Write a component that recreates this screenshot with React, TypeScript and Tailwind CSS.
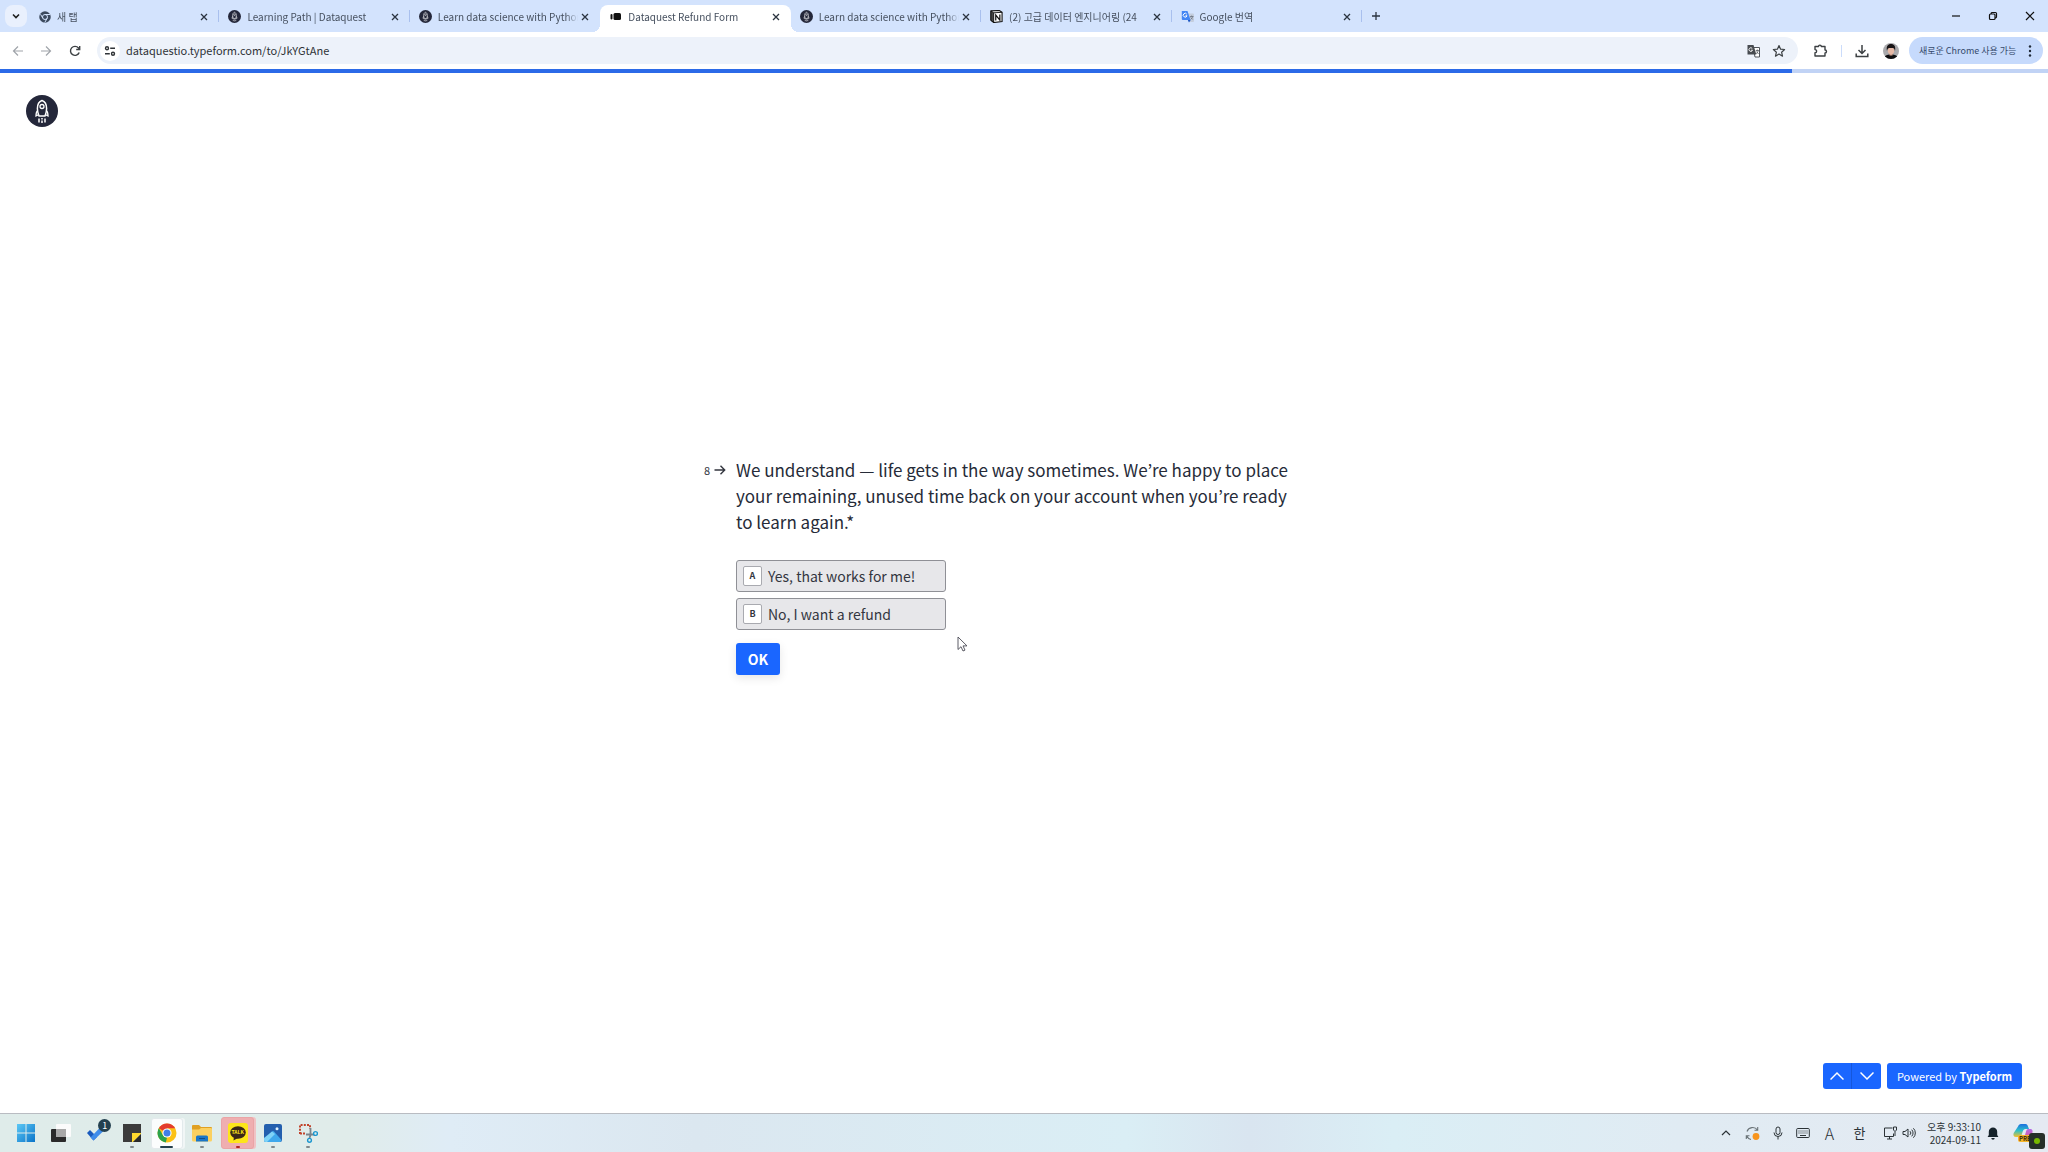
import type { ReactNode } from "react";

function RocketBadge({ className }: { className: string }) {
  return (
    <svg viewBox="0 0 32 32" className={className} aria-hidden="true">
      <circle cx="16" cy="16" r="16" fill="#24273a" />
      <path d="M16 5.500c-2.800 1-4.600 4-4.600 8 0 2.500.5 5 1.600 7.500h6c1.100-2.500 1.600-5 1.600-7.500 0-4-1.800-7-4.600-8z" fill="none" stroke="#fff" strokeWidth="1.500" />
      <circle cx="16" cy="11.500" r="2" fill="none" stroke="#fff" strokeWidth="1.300" />
      <path d="M11.700 15.500c-1.300 1-1.700 2.500-1.700 5.500l2.800-1.500M20.300 15.500c1.300 1 1.700 2.500 1.700 5.500l-2.800-1.500" fill="none" stroke="#fff" strokeWidth="1.300" />
      <path d="M13 23.500v4M16 23v1.500M16 25.500v2.500M19 23.500v4" stroke="#fff" strokeWidth="1.500" />
    </svg>
  );
}

function ChromeMono() {
  return (
    <svg viewBox="0 0 24 24" className="size-3" aria-hidden="true">
      <circle cx="12" cy="12" r="11.500" fill="#3c4a5e" />
      <circle cx="12" cy="12" r="5" fill="#3c4a5e" stroke="#d3e3fd" strokeWidth="2" />
      <path d="M12 7h10M7.700 14.500L3 6.500M16.300 14.500L11.500 23" stroke="#d3e3fd" strokeWidth="2" />
    </svg>
  );
}

function TypeformIcon() {
  return (
    <svg viewBox="0 0 13 13" className="size-[13px]" aria-hidden="true">
      <rect x="1.500" y="4" width="2" height="5.500" rx="1" fill="#111" />
      <rect x="4.500" y="3" width="7.500" height="7" rx="1.500" fill="#111" />
    </svg>
  );
}

function NotionIcon() {
  return (
    <svg viewBox="0 0 14 14" className="size-[13px]" aria-hidden="true">
      <path d="M1 1l9-.5L13 2.500v10l-9 1-3-2.500z" fill="#fff" stroke="#111" strokeWidth="1.200" />
      <path d="M1 1l3 2v10.500L1 11zM4 3l9-.5" fill="#444" stroke="#111" strokeWidth="1" />
      <path d="M6.200 11.200V5.400l4.400 5.400V4.800" fill="none" stroke="#111" strokeWidth="1.300" />
    </svg>
  );
}

function TranslateColor() {
  return (
    <svg viewBox="0 0 13 13" className="size-[13px]" aria-hidden="true">
      <path d="M5 3.500h7a1 1 0 011 1V11a1 1 0 01-1 1H8z" fill="#c4cede" />
      <path d="M1 1h5.500l3 9H1.800A1 1 0 01.8 9V1z" fill="#4285f4" />
      <path d="M6.800 10h2.900L8 12.500z" fill="#1a56c4" />
      <path d="M5.800 4.200A1.900 1.900 0 106 5.800H4.500" fill="none" stroke="#fff" strokeWidth="1" />
      <path d="M9 6.500h3.500M10.700 5.500v1M11.700 6.500c-.3 1.300-1 2.200-2 3M9.700 7.500l2 2" fill="none" stroke="#6b7280" strokeWidth=".8" />
    </svg>
  );
}

function CloseGlyph({ className }: { className: string }) {
  return (
    <svg viewBox="0 0 10 10" className={className} aria-hidden="true">
      <path d="M2 2l6 6M8 2L2 8" stroke="currentColor" strokeWidth="1.300" fill="none" />
    </svg>
  );
}

type TabData = { title: string; icon: ReactNode; active?: boolean; separator?: boolean };

const tabs: TabData[] = [
  { title: "새 탭", icon: <ChromeMono />, separator: true },
  { title: "Learning Path | Dataquest", icon: <RocketBadge className="size-[13px]" />, separator: true },
  { title: "Learn data science with Python", icon: <RocketBadge className="size-[13px]" /> },
  { title: "Dataquest Refund Form", icon: <TypeformIcon />, active: true },
  { title: "Learn data science with Python", icon: <RocketBadge className="size-[13px]" />, separator: true },
  { title: "(2) 고급 데이터 엔지니어링 (24", icon: <NotionIcon />, separator: true },
  { title: "Google 번역", icon: <TranslateColor />, separator: true },
];

function Tab({ title, icon, active, separator }: TabData) {
  return (
    <div className={active ? "relative flex h-[27px] min-w-0 flex-1 self-end rounded-t-lg bg-white" : "relative flex h-[27px] min-w-0 flex-1 self-end"}>
      {active && (
        <>
          <span className="absolute bottom-0 -left-2 size-2 bg-[radial-gradient(circle_at_0_0,transparent_8px,white_8px)]" />
          <span className="absolute -right-2 bottom-0 size-2 bg-[radial-gradient(circle_at_100%_0,transparent_8px,white_8px)]" />
        </>
      )}
      <button className="flex h-[23px] min-w-0 flex-1 items-center gap-[6px] pl-[9px] text-left">
        <span className="flex size-[13px] shrink-0 items-center justify-center">{icon}</span>
        <span className="min-w-0 flex-1 overflow-hidden mask-[linear-gradient(to_right,black_calc(100%-12px),transparent)] text-[10px] leading-4 whitespace-nowrap text-[#46505f]">
          {title}
        </span>
      </button>
      <button aria-label={`Close ${title}`} className="mr-2 flex h-[23px] w-[14px] items-center justify-center text-[#2b3440]">
        <CloseGlyph className="size-[10px]" />
      </button>
      {separator && <span className="mt-[5px] -ml-px h-3 w-px bg-[#a9c0ee]" />}
    </div>
  );
}

function TabStrip() {
  return (
    <div className="flex h-8 bg-[#d3e3fd]">
      <div className="flex w-[29px] shrink-0 items-center pl-[5px]">
        <button aria-label="Search tabs" className="flex size-[22px] items-center justify-center rounded-lg bg-[#e9f0fd]">
          <svg viewBox="0 0 10 10" className="size-[10px]" fill="none" stroke="#1f1f1f" strokeWidth="1.600">
            <path d="M2 3.500l3 3 3-3" />
          </svg>
        </button>
      </div>
      <div className="flex min-w-0 shrink basis-[1333px]">
        {tabs.map((t, i) => (
          <Tab key={i} {...t} />
        ))}
      </div>
      <button aria-label="New tab" className="flex w-[28px] items-center justify-center">
        <svg viewBox="0 0 10 10" className="size-[10px]" stroke="#2b3440" strokeWidth="1.300">
          <path d="M5 1v8M1 5h8" />
        </svg>
      </button>
      <div className="ml-auto flex text-[#111]">
        <button aria-label="Minimize" className="flex w-[37px] items-center justify-center">
          <svg viewBox="0 0 10 10" className="size-[10px]" stroke="currentColor" strokeWidth="1.200">
            <path d="M1 5h8" />
          </svg>
        </button>
        <button aria-label="Restore" className="flex w-[37px] items-center justify-center">
          <svg viewBox="0 0 10 10" className="size-[10px]" fill="none" stroke="currentColor" strokeWidth="1.200">
            <rect x="1.500" y="3" width="5.500" height="5.500" rx="1" />
            <path d="M3.200 3V2.500a1 1 0 011-1h3.300a1 1 0 011 1v3.300a1 1 0 01-1 1H7" />
          </svg>
        </button>
        <button aria-label="Close window" className="flex w-[37px] items-center justify-center">
          <svg viewBox="0 0 10 10" className="size-[10px]" stroke="currentColor" strokeWidth="1.200">
            <path d="M1 1l8 8M9 1L1 9" />
          </svg>
        </button>
      </div>
    </div>
  );
}

function Toolbar() {
  return (
    <div className="flex h-[37px] items-center bg-white pr-[5px] pl-1">
      <button aria-label="Back" className="flex w-7 items-center justify-center">
        <svg viewBox="0 0 12 12" className="size-3" fill="none" stroke="#a0a4aa" strokeWidth="1.200">
          <path d="M11 6H1.500M6 1.500L1.500 6 6 10.500" />
        </svg>
      </button>
      <button aria-label="Forward" className="flex w-7 items-center justify-center">
        <svg viewBox="0 0 12 12" className="size-3" fill="none" stroke="#a0a4aa" strokeWidth="1.200">
          <path d="M1 6h9.500M6 1.500L10.500 6 6 10.500" />
        </svg>
      </button>
      <button aria-label="Reload" className="flex w-[30px] items-center justify-center">
        <svg viewBox="0 0 12 12" className="size-3" fill="none" stroke="#3c4043" strokeWidth="1.400">
          <path d="M10.200 7.500A4.500 4.500 0 119.500 3l1 1.200" />
          <path d="M10.700 1v3.500H7.200" />
        </svg>
      </button>
      <div className="ml-[7px] flex h-[27px] min-w-0 flex-1 items-center rounded-full bg-[#edf2fa] pr-[7px] pl-[3px]">
        <button aria-label="View site information" className="flex size-5 items-center justify-center rounded-full bg-white">
          <svg viewBox="0 0 12 12" className="size-3" fill="none" stroke="#2f3337" strokeWidth="1.400">
            <circle cx="3" cy="3.200" r="1.500" />
            <path d="M6.200 3.200H11M1 8.800h4.800" />
            <circle cx="9" cy="8.800" r="1.500" />
          </svg>
        </button>
        <input
          aria-label="Address"
          defaultValue="dataquestio.typeform.com/to/JkYGtAne"
          className="ml-[6px] min-w-0 flex-1 bg-transparent pb-[2px] text-[11px] leading-5 text-[#2f3337] outline-none"
        />
        <button aria-label="Translate this page" className="flex w-[26px] items-center justify-center">
          <svg viewBox="0 0 14 14" className="size-[14px]">
            <path d="M6 3.500h6.500v9.500H8z" fill="#fff" stroke="#50555b" strokeWidth="1" />
            <path d="M.5 1h6l2.800 9.500H.5z" fill="#474b50" />
            <path d="M5.300 4.600a1.800 1.800 0 10.200 1.600H4" fill="none" stroke="#fff" strokeWidth=".9" />
            <path d="M8.800 6.500h3M10.300 5.500v1M11.300 6.500c-.3 1.500-1 2.500-2 3.300M9.300 7.500l2.300 2.500" fill="none" stroke="#50555b" strokeWidth=".8" />
          </svg>
        </button>
        <button aria-label="Bookmark this tab" className="flex w-[24px] items-center justify-center">
          <svg viewBox="0 0 14 14" className="size-[14px]" fill="none" stroke="#3c4043" strokeWidth="1.200" strokeLinejoin="round">
            <path d="M7 1.500l1.600 3.700 4 .3-3 2.700.9 4L7 10.100l-3.500 2.100.9-4-3-2.700 4-.3z" />
          </svg>
        </button>
      </div>
      <button aria-label="Extensions" className="ml-2 flex w-7 items-center justify-center">
        <svg viewBox="0 0 15 15" className="size-[15px]" fill="none" stroke="#3c4043" strokeWidth="1.400" strokeLinejoin="round">
          <path d="M2 3.500h3.500a1.400 1.400 0 012.800 0H12V7a1.500 1.500 0 010 3v3H2v-3.200a1.600 1.600 0 000-3.200z" />
        </svg>
      </button>
      <span className="mr-[6px] ml-[7px] h-3 w-px bg-[#cbdcfb]" />
      <button aria-label="Downloads" className="flex w-7 items-center justify-center">
        <svg viewBox="0 0 14 14" className="size-[14px]" fill="none" stroke="#3c4043" strokeWidth="1.500">
          <path d="M7 1v8M3.500 6L7 9.500 10.500 6M1.200 9.500v3h11.600v-3" />
        </svg>
      </button>
      <button aria-label="Profile" className="flex w-[30px] items-center justify-center">
        <svg viewBox="0 0 16 16" className="size-4 rounded-full">
          <rect width="16" height="16" fill="#a9a9ac" />
          <path d="M1 16c0-3.500 3-4.500 7-4.500s7 1 7 4.500z" fill="#0c0c0e" />
          <rect x="6.500" y="9" width="3" height="3.500" fill="#d9a58f" />
          <ellipse cx="8" cy="7.400" rx="3.200" ry="3.800" fill="#e6b9a6" />
          <path d="M4 8C3 3 5 1 8 1s5 2 4 7c-.5-2.500-1-3-4-3S4.500 5.500 4 8z" fill="#191516" />
        </svg>
      </button>
      <button className="ml-[3px] flex h-[27px] w-[134px] items-center justify-between rounded-full bg-[#c6dafc] pr-[11px] pl-[10px] text-[9px] leading-4 whitespace-nowrap text-[#35496b]">
        <span>새로운 Chrome 사용 가능</span>
        <svg viewBox="0 0 4 12" className="h-3 w-1 shrink-0" fill="#1f2937">
          <circle cx="2" cy="1.500" r="1.200" />
          <circle cx="2" cy="6" r="1.200" />
          <circle cx="2" cy="10.500" r="1.200" />
        </svg>
      </button>
    </div>
  );
}

function Choice({ letter, label }: { letter: string; label: string }) {
  return (
    <label className="flex h-8 w-[210px] items-center rounded-[3px] border border-[#8f9096] bg-[#e7e7ea] px-[6px] text-[#33363f]">
      <input type="radio" name="offer" value={letter} className="sr-only" />
      <span className="flex h-5 w-[19px] items-center justify-center rounded-[2px] border border-[#a9aab0] bg-white text-[9px] leading-3 font-bold">
        {letter}
      </span>
      <span className="ml-[6px] text-[14px] leading-5">{label}</span>
    </label>
  );
}

function Question() {
  return (
    <form className="grid w-full max-w-[642px] grid-cols-[33px_1fr] pr-[33px]" onSubmit={(e) => e.preventDefault()}>
      <div className="flex h-[26px] items-center gap-1 pl-px text-[11px] leading-4 text-[#33363f]">
        <span>8</span>
        <svg viewBox="0 0 12 12" className="size-3" fill="none" stroke="#33363f" strokeWidth="1.400">
          <path d="M.5 6h10M6.500 1.800L10.700 6l-4.200 4.200" />
        </svg>
      </div>
      <fieldset>
        <legend className="pr-3 text-[17px] leading-[26px] text-[#262b38]">
          We understand — life gets in the way sometimes. We’re happy to place your remaining, unused time back on your account when you’re ready to learn again.*
        </legend>
        <div className="mt-[25px] flex flex-col gap-[6px]">
          <Choice letter="A" label="Yes, that works for me!" />
          <Choice letter="B" label="No, I want a refund" />
        </div>
        <button type="submit" className="mt-[13px] h-8 w-11 rounded-[3px] bg-[#1a66ff] text-[14px] leading-5 font-bold text-white shadow-[0_3px_10px_rgba(0,0,0,0.1)]">
          OK
        </button>
      </fieldset>
    </form>
  );
}

function TaskIcon({ label, children, mark, cell }: { label: string; children: ReactNode; mark?: string; cell?: string }) {
  return (
    <button aria-label={label} className="relative flex h-full items-center justify-center">
      {cell && <span className={cell} />}
      <span className="relative flex">{children}</span>
      {mark && <span className={mark} />}
    </button>
  );
}

const dot = "absolute bottom-[4px] h-[2px] w-1 rounded-full bg-[#80898c]";

function TaskbarApps() {
  return (
    <div className="ml-2 grid w-[318px] shrink-0 grid-cols-9">
      <TaskIcon label="Start">
        <svg viewBox="0 0 20 20" className="size-5">
          <defs>
            <linearGradient id="win" x1="0" y1="0" x2="1" y2="1">
              <stop offset="0" stopColor="#5cc8f5" />
              <stop offset="1" stopColor="#0a74c9" />
            </linearGradient>
          </defs>
          <path d="M1 1h8.500v8.500H1zM10.500 1H19v8.500h-8.500zM1 10.500h8.500V19H1zM10.500 10.500H19V19h-8.500z" fill="url(#win)" />
        </svg>
      </TaskIcon>
      <TaskIcon label="Task view">
        <svg viewBox="0 0 20 20" className="size-5">
          <rect x="0" y="6" width="15" height="13" rx="1" fill="#2a2a2a" />
          <rect x="5" y="1" width="15" height="13" rx="1" fill="#fbfbfb" />
          <rect x="5" y="6" width="10" height="8" fill="#a8a8a8" />
        </svg>
      </TaskIcon>
      <TaskIcon label="To Do, 1 notification">
        <span className="relative flex size-[26px]">
          <svg viewBox="0 0 26 26" className="size-[26px]">
            <path d="M4 13l3-3 7 7-3.500 3.500z" fill="#195abd" />
            <path d="M7.500 17.500L17.500 7l3.500 3.500-10.500 10z" fill="#3d8bea" />
          </svg>
          <span className="absolute -top-px -right-[2px] flex size-[13px] items-center justify-center rounded-full bg-[#24404f] text-[9px] leading-3 text-white">1</span>
        </span>
      </TaskIcon>
      <TaskIcon label="Sticky Notes" mark={dot}>
        <svg viewBox="0 0 18 18" className="size-[18px]">
          <path d="M0 0h18v10l-8 8H0z" fill="#3b3b3b" />
          <path d="M9 9h9v1l-8 8H9z" fill="#ffd92e" />
          <path d="M18 10v8h-8z" fill="#2a2a2a" />
        </svg>
      </TaskIcon>
      <TaskIcon
        label="Chrome"
        cell="absolute inset-x-[2px] top-1 bottom-[3px] rounded-[3px] border border-[#e3eaec] bg-[#fbfdfd] shadow-[2px_0_0_#f1f6f6]"
        mark="absolute bottom-[4px] h-[2px] w-[13px] rounded-full bg-[#25404d]"
      >
        <svg viewBox="0 0 20 20" className="size-5">
          <circle cx="10" cy="10" r="9.500" fill="#fbc116" />
          <path d="M10 10L1.770 5.250A9.500 9.500 0 0118.230 5.250H10z" fill="#e33b2e" />
          <path d="M1.770 5.250L6.100 12.500l3.900 2.200-1.200 4.700A9.500 9.500 0 011.770 5.250z" fill="#2ba24c" />
          <circle cx="10" cy="10" r="4.600" fill="#fff" />
          <circle cx="10" cy="10" r="3.500" fill="#3f7ee8" />
        </svg>
      </TaskIcon>
      <TaskIcon label="File Explorer" mark={dot}>
        <svg viewBox="0 0 20 20" className="size-5">
          <path d="M0 3a1 1 0 011-1h6l2 2h10a1 1 0 011 1v4H0z" fill="#e0a022" />
          <path d="M0 6.500h7l2-1.500h10a1 1 0 011 1v11a1.500 1.500 0 01-1.500 1.500h-17A1.500 1.500 0 010 17z" fill="#fbd060" />
          <path d="M4 18.500V14a1.500 1.500 0 011.500-1.500h9A1.500 1.500 0 0116 14v4.500z" fill="#1976c8" />
          <path d="M7 15.500h6" stroke="#0f4d8c" />
        </svg>
      </TaskIcon>
      <TaskIcon
        label="KakaoTalk"
        cell="absolute inset-x-[1px] top-[3px] bottom-[3px] rounded-[3px] border border-[#eaa4a6] bg-[#efaeb0] shadow-[2px_0_0_#f0c3c5]"
        mark="absolute bottom-[4px] h-[2px] w-1 rounded-full bg-[#b3261e]"
      >
        <span className="relative flex size-5 items-center justify-center rounded-[3px] bg-[#fde51a]">
          <svg viewBox="0 0 16 15" className="h-[15px] w-4">
            <ellipse cx="8" cy="6.500" rx="7.800" ry="6.200" fill="#3a2718" />
            <path d="M4 10l-.5 4.500L8 12z" fill="#3a2718" />
          </svg>
          <span className="absolute inset-x-0 top-[6px] text-center text-[5px] leading-[6px] font-bold text-[#fde51a]">TALK</span>
        </span>
      </TaskIcon>
      <TaskIcon label="Photos" mark={dot}>
        <svg viewBox="0 0 18 18" className="size-[18px]">
          <rect width="18" height="18" rx="2" fill="#235fae" />
          <path d="M0 16L8 7.500a1.500 1.500 0 012 0L17.500 16a2 2 0 01-1.500 2H2a2 2 0 01-2-2z" fill="#3fa8ec" />
          <path d="M0 14L8 7.500 11 10l-8 8H2a2 2 0 01-2-2z" fill="#7fd3f7" />
          <circle cx="13" cy="4.800" r="1.500" fill="#dff1fd" />
        </svg>
      </TaskIcon>
      <TaskIcon label="Snipping Tool" mark={dot}>
        <svg viewBox="0 0 20 20" className="size-5" fill="none">
          <path d="M2 11V2h10v4" stroke="#c2442c" strokeWidth="2" strokeDasharray="2 1.200" />
          <path d="M2 10.500h5" stroke="#c2442c" strokeWidth="2" strokeDasharray="2 1" />
          <path d="M12.500 5v7l-1 3M8 11.500h8" stroke="#7a848c" strokeWidth="1.800" />
          <circle cx="17.500" cy="10.500" r="1.900" stroke="#1a96cf" strokeWidth="1.400" />
          <circle cx="11.500" cy="17.300" r="1.900" stroke="#1a96cf" strokeWidth="1.400" />
        </svg>
      </TaskIcon>
    </div>
  );
}

function SystemTray() {
  return (
    <div className="ml-auto flex items-center text-[#2b3236]">
      <button aria-label="Show hidden icons" className="flex w-[26px] justify-center">
        <svg viewBox="0 0 10 10" className="size-[10px]" fill="none" stroke="currentColor" strokeWidth="1.200">
          <path d="M1 7l4-4 4 4" />
        </svg>
      </button>
      <button aria-label="Updates" className="flex w-[26px] justify-center">
        <svg viewBox="0 0 15 15" className="size-[15px]" fill="none" stroke="#6b7478" strokeWidth="1.100">
          <path d="M2 5.500A6 6 0 0112.500 4M12.700 1v3.300H9.500M6 13.500A6 6 0 011.800 10M1.300 13V9.700h3.200" />
          <circle cx="11" cy="10.500" r="3.400" fill="#f7941d" stroke="none" />
        </svg>
      </button>
      <button aria-label="Microphone" className="flex w-[25px] justify-center">
        <svg viewBox="0 0 14 14" className="size-[14px]" fill="none" stroke="currentColor" strokeWidth="1">
          <rect x="5" y="1" width="4" height="7.500" rx="2" />
          <path d="M3 6.500a4 4 0 008 0M7 10.500V13.500" />
        </svg>
      </button>
      <button aria-label="Touch keyboard" className="flex w-[26px] justify-center">
        <svg viewBox="0 0 14 14" className="size-[14px]" fill="none" stroke="currentColor" strokeWidth="1">
          <rect x=".7" y="2.500" width="12.600" height="9" rx="1" />
          <path d="M2.500 5h9M2.500 7h9" strokeDasharray="1 1" />
          <path d="M4 9.500h6" />
        </svg>
      </button>
      <button className="w-[27px] text-center text-[16px] leading-5 font-light">A</button>
      <button className="w-[33px] text-center text-[13px] leading-5">한</button>
      <button aria-label="Network" className="ml-1 flex w-[19px] justify-center">
        <svg viewBox="0 0 14 14" className="size-[14px]" fill="none" stroke="currentColor" strokeWidth="1">
          <path d="M9.500 2H1.500v8.500h9V7.500M4 13h5M6.500 10.500V13" />
          <path d="M10.500 1h3v3l-1.500 1.500L10.500 4zM12 5.500V10" />
        </svg>
      </button>
      <button aria-label="Volume" className="flex w-[19px] justify-center">
        <svg viewBox="0 0 14 14" className="size-[14px]" fill="none" stroke="currentColor" strokeWidth="1">
          <path d="M1 5.500h2L6 3v8L3 8.500H1zM8 5.200a2.500 2.500 0 010 3.600M9.700 3.700a4.700 4.700 0 010 6.600M11.400 2.300a6.700 6.700 0 010 9.400" />
        </svg>
      </button>
      <button className="w-[63px] text-right text-[10px] leading-[13px] whitespace-nowrap">
        <span className="block">오후 9:33:10</span>
        <span className="block">2024-09-11</span>
      </button>
      <button aria-label="Notifications" className="ml-[5px] flex w-[14px] justify-center">
        <svg viewBox="0 0 12 13" className="h-[13px] w-3" fill="#16232b">
          <path d="M6 .5a4.200 4.200 0 00-4.200 4.200V8L.6 10h10.800l-1.200-2V4.700A4.200 4.200 0 006 .5zM4.300 11h3.400a1.700 1.700 0 01-3.400 0z" />
        </svg>
      </button>
      <button aria-label="Copilot" className="relative ml-[13px] flex w-[35px]">
        <svg viewBox="0 0 20 20" className="size-5">
          <defs>
            <linearGradient id="cpl" x1="0" y1="0" x2="0" y2="1">
              <stop offset="0" stopColor="#1c6fe0" />
              <stop offset=".5" stopColor="#2cc0c9" />
              <stop offset="1" stopColor="#f5c02b" />
            </linearGradient>
            <linearGradient id="cpr" x1="0" y1="0" x2="0" y2="1">
              <stop offset="0" stopColor="#b26be8" />
              <stop offset="1" stopColor="#f0567b" />
            </linearGradient>
          </defs>
          <path d="M5 3.500C5.500 2 6.500 1 8 1h4.500c1.500 0 2 1 2.500 2.500L16 6h-3.500c-1.500 0-2.300 1-2.800 2.500L8 14H3c-2.500 0-3-2-2.300-4z" fill="url(#cpl)" />
          <path d="M15 6h2c2.500 0 3 2 2.300 4l-2 6c-.5 1.500-1.500 2.500-3 2.500H8c2 0 2.500-1.500 3-3l2-7C13.500 7 14 6 15 6z" fill="url(#cpr)" />
        </svg>
        <span className="absolute top-3 left-[5px] rounded-[2px] bg-[#f4b62c] px-px text-[6px] leading-[7px] font-bold text-[#3a2606]">PRE</span>
        <span className="absolute top-[10px] left-4 flex size-4 items-center justify-center rounded-[3px] bg-[#263029]">
          <span className="size-[6px] rounded-full bg-[#77b900]" />
        </span>
      </button>
    </div>
  );
}

export default function App() {
  return (
    <div className="flex h-screen flex-col overflow-hidden bg-white font-['Noto_Sans_CJK_KR','Noto_Sans',sans-serif]">
      <header className="shrink-0">
        <TabStrip />
        <Toolbar />
      </header>
      <main className="relative flex min-h-0 flex-1 flex-col">
        <div role="progressbar" aria-label="Form progress" aria-valuenow={87} className="h-1 shrink-0 bg-[#c1d3f5]">
          <div className="h-full w-[87.5%] bg-[#2b6ae8]" />
        </div>
        <a href="#home" aria-label="Dataquest" className="mt-[22px] ml-[26px] size-8 shrink-0">
          <RocketBadge className="size-8" />
        </a>
        <div className="flex flex-1 items-center justify-center pb-[58px]">
          <Question />
        </div>
        <footer className="mr-[26px] mb-6 flex h-[26px] shrink-0 justify-end gap-[6px] text-white">
          <div className="flex overflow-hidden rounded-[3px] bg-[#1a66ff]">
            <button aria-label="Previous question" className="flex w-[29px] items-center justify-center border-r border-[#1557dc]">
              <svg viewBox="0 0 14 10" className="h-[10px] w-[14px]" fill="none" stroke="currentColor" strokeWidth="1.500">
                <path d="M.5 8.500L7 2l6.500 6.500" />
              </svg>
            </button>
            <button aria-label="Next question" className="flex w-[29px] items-center justify-center">
              <svg viewBox="0 0 14 10" className="h-[10px] w-[14px]" fill="none" stroke="currentColor" strokeWidth="1.500">
                <path d="M.5 1.500L7 8l6.500-6.500" />
              </svg>
            </button>
          </div>
          <a href="#typeform" className="flex w-[135px] items-center justify-center rounded-[3px] bg-[#1a66ff] text-[11px] leading-4 whitespace-pre">
            Powered by <b>Typeform</b>
          </a>
        </footer>
        <svg viewBox="0 0 11 16" className="absolute top-[567px] left-[957px] h-4 w-[11px]" fill="#fff" stroke="#4b4b55" strokeWidth=".9" aria-hidden="true">
          <path d="M1 1v12.500l3-2.800 2 4.300 2-.9-2-4.200h4z" />
        </svg>
      </main>
      <nav
        aria-label="Taskbar"
        className="flex h-[39px] shrink-0 border-t border-[#b9bcc2] bg-[linear-gradient(to_right,#dfecea_0%,#e0ecea_17%,#dfecf6_22%,#dbe7f0_34%,#daeef5_55%,#d9e5f0_61%,#daeef5_68%,#e0ebf3_82%,#e5eaf2_100%)]"
      >
        <TaskbarApps />
        <SystemTray />
      </nav>
    </div>
  );
}
